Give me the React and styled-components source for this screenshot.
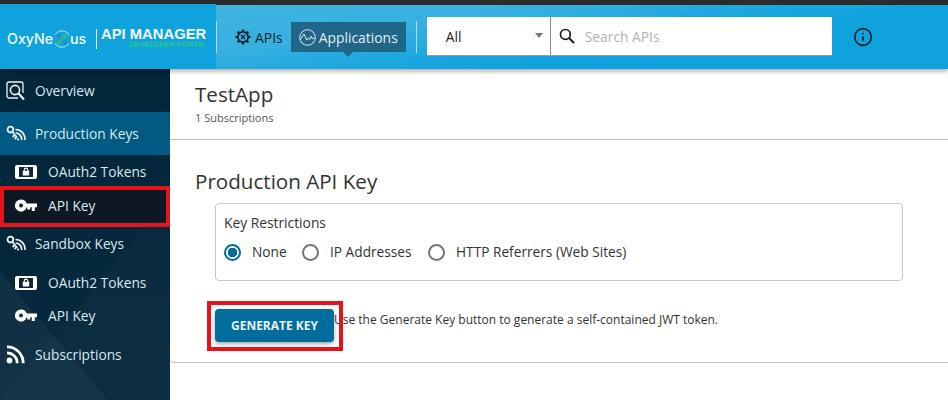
import React from "react";
import styled, { createGlobalStyle } from "styled-components";
import { Info } from "lucide-react";

const GlobalStyle = createGlobalStyle`
  html, body {
    margin: 0;
    padding: 0;
    background: #fff;
    overflow: hidden;
  }
  body {
    font-family: "Open Sans", "Liberation Sans", sans-serif;
  }
  * {
    box-sizing: border-box;
  }
`;

const GearIcon = () => (
  <svg width="16" height="16" viewBox="0 0 16 16" fill="none" stroke="#10242f">
    <circle cx="8" cy="8" r="5.2" strokeWidth="1.8" />
    <path d="M8 .4v2.6M8 13v2.6M.4 8H3M13 8h2.6M2.6 2.6l1.9 1.9M11.5 11.5l1.9 1.9M13.4 2.6l-1.9 1.9M4.5 11.5l-1.9 1.9" strokeWidth="2.2" />
    <path d="M6 6l4 4M10 6l-4 4" strokeWidth="1.3" />
  </svg>
);

const WaveIcon = () => (
  <svg width="17" height="17" viewBox="0 0 17 17" fill="none" stroke="#e4eef3" strokeWidth="1">
    <circle cx="8.5" cy="8.5" r="7.8" />
    <path d="M1.2 10.5L5 5.2l2.8 6 1.6-2.4 1.4 1.6 1.4-3.2 1.2 2.4 2-.4" />
  </svg>
);

const SearchIcon = () => (
  <svg width="16" height="16" viewBox="0 0 16 16" fill="none" stroke="#1c1c1c">
    <circle cx="6.4" cy="6.4" r="4.9" strokeWidth="1.7" />
    <path d="M10 10l5 5" strokeWidth="2" />
  </svg>
);

const OverviewIcon = () => (
  <svg width="20" height="20" viewBox="0 0 20 20" fill="none" stroke="#eef4f7">
    <path d="M12 17H3a2 2 0 0 1-2-2V3a2 2 0 0 1 2-2h12a2 2 0 0 1 2 2v9" strokeWidth="1.3" />
    <circle cx="9" cy="9" r="4.6" strokeWidth="1.6" />
    <path d="M12.5 12.5l5.5 6" strokeWidth="2.2" />
  </svg>
);

const KeyFeedIcon = () => (
  <svg width="20" height="18" viewBox="0 0 20 18" fill="none" stroke="#eef4f7">
    <circle cx="4.4" cy="4.6" r="2.9" strokeWidth="1.8" />
    <path d="M6.2 6.8l5 6M8.8 10l-2.2 2M10.6 12.2l-2 1.8" strokeWidth="1.7" />
    <path d="M9.5 4.5a9.5 9.5 0 0 1 9.5 10.5M9.5 8a6 6 0 0 1 6 7" strokeWidth="1.7" />
    <circle cx="12" cy="14.5" r="1.1" fill="#eef4f7" stroke="none" />
  </svg>
);

const FeedIcon = () => (
  <svg width="19" height="19" viewBox="0 0 19 19" fill="none" stroke="#fff">
    <path d="M1 1.8a16.2 16.2 0 0 1 16.2 16.4M1 7.8a10.2 10.2 0 0 1 10.2 10.4" strokeWidth="2.8" />
    <circle cx="3.5" cy="15.5" r="2.9" fill="#fff" stroke="none" />
  </svg>
);

const TokenIcon = () => (
  <svg width="22" height="14" viewBox="0 0 22 14">
    <rect width="22" height="14" rx="2" fill="#fff" />
    <rect x="4" y="2" width="14" height="10" fill="#0c2433" />
    <rect x="7.8" y="5.8" width="6.4" height="4.8" rx=".5" fill="#fff" />
    <path d="M9.2 6V4.9a1.8 1.8 0 0 1 3.6 0V6" fill="none" stroke="#fff" strokeWidth="1.1" />
  </svg>
);

const KeyIcon = () => (
  <svg width="22" height="13" viewBox="0 0 22 13">
    <path fillRule="evenodd" fill="#fff" d="M6 .5a6 6 0 0 1 5.7 4.1H22v3.6h-2.2V12h-3V8.2h-1.6v2.4h-2.9V8.2h-.6A6 6 0 1 1 6 .5zm0 4a2 2 0 1 0 0 4 2 2 0 0 0 0-4z" />
  </svg>
);

const LogoMark = () => (
  <svg width="24" height="24" viewBox="0 0 24 24" fill="none">
    <path d="M3.5 7a10 10 0 0 1 17 0M20.5 17a10 10 0 0 1-17 0" stroke="#d8f3fb" strokeWidth="1" />
    <path d="M6.5 6.5l11 11" stroke="#1e8fc8" strokeWidth="4.4" />
    <path d="M17.5 6.5l-11 11" stroke="#2ab59a" strokeWidth="4.4" />
  </svg>
);

const sideItems = [
  { label: "Overview", icon: <OverviewIcon />, kind: "top" },
  { label: "Production Keys", icon: <KeyFeedIcon />, kind: "active" },
  { label: "OAuth2 Tokens", icon: <TokenIcon />, kind: "sub", h: 33 },
  { label: "API Key", icon: <KeyIcon />, kind: "selected", h: 34 },
  { label: "Sandbox Keys", icon: <KeyFeedIcon />, kind: "top", h: 43 },
  { label: "OAuth2 Tokens", icon: <TokenIcon />, kind: "sub", h: 35 },
  { label: "API Key", icon: <KeyIcon />, kind: "sub", h: 31 },
  { label: "Subscriptions", icon: <FeedIcon />, kind: "top", h: 46 },
];

const App = () => {
  return (
    <Page>
      <GlobalStyle />
      <Header>
        <LogoBlock>
          <Logo>
            OxyNe
            <LogoX>
              <LogoMark />
            </LogoX>
            us
          </Logo>
          <LogoRule />
          <Product>
            <ProductName>API MANAGER</ProductName>
            <ProductSub>DEVELOPER PORTAL</ProductSub>
          </Product>
        </LogoBlock>
        <Nav>
          <NavDivider />
          <NavLink>
            <GearIcon />
            APIs
          </NavLink>
          <NavLink $active>
            <WaveIcon />
            Applications
          </NavLink>
          <NavDivider />
          <SearchBar>
            <Select>
              All
              <Caret />
            </Select>
            <SearchField>
              <SearchIcon />
              <Placeholder>Search APIs</Placeholder>
            </SearchField>
          </SearchBar>
          <InfoWrap>
            <Info size={20} strokeWidth={2} color="#10242f" />
          </InfoWrap>
        </Nav>
      </Header>
      <Body>
        <Sidebar>
          {sideItems.map((item, i) => (
            <SideRow key={i} $kind={item.kind} $h={item.h}>
              <SideIcon $kind={item.kind}>{item.icon}</SideIcon>
              {item.label}
            </SideRow>
          ))}
          <Highlight $top={117} $left={0} $w={170} $h={41} />
        </Sidebar>
        <Main>
          <TitleBar>
            <Title>TestApp</Title>
            <SubTitle>1 Subscriptions</SubTitle>
          </TitleBar>
          <Card>
            <CardTitle>Production API Key</CardTitle>
            <Fieldset>
              <Legend>Key Restrictions</Legend>
              <RadioRow>
                <RadioItem $w={78}>
                  <Radio $on />
                  None
                </RadioItem>
                <RadioItem $w={126}>
                  <Radio />
                  IP Addresses
                </RadioItem>
                <RadioItem>
                  <Radio />
                  HTTP Referrers (Web Sites)
                </RadioItem>
              </RadioRow>
            </Fieldset>
            <ActionRow>
              <GenerateButton>GENERATE KEY</GenerateButton>
              <Hint>Use the Generate Key button to generate a self-contained JWT token.</Hint>
              <Highlight $top={-8} $left={-8} $w={136} $h={50} />
            </ActionRow>
          </Card>
        </Main>
      </Body>
    </Page>
  );
};

const Page = styled.div`
  width: 948px;
  height: 400px;
  overflow: hidden;
  background: #fff;
`;

const Header = styled.header`
  position: relative;
  z-index: 2;
  display: flex;
  height: 69px;
  border-top: 4px solid #2b2b2b;
  background: #0fa2dc;
  box-shadow: 0 2px 5px rgba(0, 0, 0, 0.35);
`;

const LogoBlock = styled.div`
  display: flex;
  align-items: center;
  width: 216px;
  padding: 4px 0 0 7px;
  background: #0fa2dc;
  color: #fff;
`;

const Logo = styled.div`
  display: flex;
  align-items: center;
  width: 89px;
  font-family: "Inter", sans-serif;
  font-size: 14.2px;
  font-weight: 500;
  color: #eefaff;
`;

const LogoX = styled.span`
  display: flex;
  width: 17px;
  margin: 0;
  justify-content: center;
  svg {
    flex: none;
    width: 20px;
    height: 20px;
  }
`;

const LogoRule = styled.div`
  width: 1px;
  height: 20px;
  margin: 0 4px 0 0;
  background: #fff;
`;

const Product = styled.div`
  display: flex;
  flex-direction: column;
  align-items: flex-end;
  margin-top: -3px;
`;

const ProductName = styled.div`
  font-family: "Liberation Sans", sans-serif;
  font-size: 14.8px;
  font-weight: 700;
  line-height: 14px;
  white-space: nowrap;
  color: #f2fbff;
`;

const ProductSub = styled.div`
  font-family: "Liberation Sans", sans-serif;
  font-size: 7.5px;
  line-height: 7px;
  white-space: nowrap;
  color: #38d860;
`;

const Nav = styled.nav`
  flex: 1;
  display: flex;
  align-items: center;
  padding-top: 1px;
  background: linear-gradient(172deg, #40b4e1 0%, #36b0e0 30%, #1ea8df 46%, #0fa2dc 62%);
  border-top: 1px solid #2b2b2b;
`;

const NavDivider = styled.div`
  flex: none;
  width: 1px;
  height: 32px;
  margin-top: -1px;
  background: #b9d6e2;
`;

const NavLink = styled.a`
  position: relative;
  display: flex;
  align-items: center;
  gap: ${(p) => (p.$active ? "3px" : "4px")};
  height: 30px;
  margin: -1px 0 0 0;
  padding: ${(p) => (p.$active ? "0 8px 0 8px" : "0 8px 0 18px")};
  margin-right: ${(p) => (p.$active ? "10px" : "0")};
  font-size: 13.9px;
  color: ${(p) => (p.$active ? "#e4eef3" : "#10242f")};
  background: ${(p) => (p.$active ? "#1f6688" : "transparent")};
  white-space: nowrap;

  &::after {
    content: "";
    display: ${(p) => (p.$active ? "block" : "none")};
    position: absolute;
    left: 50%;
    bottom: -5px;
    margin-left: -5px;
    border-left: 5px solid transparent;
    border-right: 5px solid transparent;
    border-top: 5px solid #1f6688;
  }
`;

const SearchBar = styled.div`
  display: flex;
  width: 405px;
  height: 39px;
  margin: -2px 0 0 10px;
  background: #fff;
  border-bottom: 1px solid #9a9a9a;
`;

const Select = styled.div`
  position: relative;
  display: flex;
  align-items: center;
  width: 124px;
  padding-left: 19px;
  font-size: 13.8px;
  color: #222;
  border-right: 1px solid #8d8d8d;
`;

const Caret = styled.span`
  position: absolute;
  right: 7px;
  top: 16px;
  border-left: 4px solid transparent;
  border-right: 4px solid transparent;
  border-top: 5px solid #777;
`;

const SearchField = styled.div`
  flex: 1;
  display: flex;
  align-items: center;
  gap: 10px;
  padding-left: 8px;
`;

const Placeholder = styled.span`
  font-size: 13.8px;
  color: #aeb3b7;
`;

const InfoWrap = styled.div`
  display: flex;
  margin: -2px 0 0 21px;
`;

const Body = styled.div`
  display: flex;
  height: 331px;
`;

const Sidebar = styled.aside`
  position: relative;
  flex: none;
  width: 170px;
  background:
    linear-gradient(50deg, rgba(255, 255, 255, 0.04) 0 24%, transparent 24%),
    linear-gradient(130deg, transparent 0 62%, rgba(255, 255, 255, 0.02) 62%),
    linear-gradient(180deg, #03263a 0%, #08293d 100%);
`;

const rowBackground = {
  active: "#005a82",
  selected: "#0e1724",
};

const SideRow = styled.div`
  display: flex;
  align-items: center;
  height: ${(p) => p.$h || 43}px;
  padding-left: ${(p) => (p.$kind === "sub" || p.$kind === "selected" ? "15px" : "6px")};
  font-size: 13.75px;
  color: #d8e8f0;
  background: ${(p) => rowBackground[p.$kind] || "transparent"};
`;

const SideIcon = styled.span`
  display: flex;
  align-items: center;
  justify-content: flex-start;
  flex: none;
  width: ${(p) => (p.$kind === "sub" || p.$kind === "selected" ? "33px" : "29px")};
`;

const Highlight = styled.div`
  position: absolute;
  top: ${(p) => p.$top}px;
  left: ${(p) => p.$left}px;
  width: ${(p) => p.$w}px;
  height: ${(p) => p.$h}px;
  border: 4px solid #e5141b;
  pointer-events: none;
`;

const Main = styled.main`
  flex: 1;
  min-width: 0;
`;

const TitleBar = styled.div`
  height: 71px;
  padding: 12px 25px 0;
  border-bottom: 1px solid #bdbdbd;
`;

const Title = styled.h1`
  margin: 0;
  font-size: 20.6px;
  font-weight: 400;
  line-height: 27px;
  color: #333;
`;

const SubTitle = styled.div`
  margin-top: 2px;
  font-size: 11px;
  line-height: 15px;
  color: #555;
`;

const Card = styled.section`
  height: 223px;
  padding: 28px 25px 0;
  border-bottom: 1px solid #bdbdbd;
  border-radius: 0 0 0 4px;
`;

const CardTitle = styled.h2`
  margin: 0;
  font-size: 20.6px;
  font-weight: 400;
  line-height: 27px;
  color: #333;
`;

const Fieldset = styled.div`
  width: 688px;
  height: 78px;
  margin: 8px 0 0 20px;
  padding: 9px 8px 0;
  border: 1px solid #c8c8c8;
  border-radius: 4px;
`;

const Legend = styled.div`
  font-size: 13.8px;
  line-height: 20px;
  color: #333;
`;

const RadioRow = styled.div`
  display: flex;
  margin-top: 9px;
`;

const RadioItem = styled.label`
  display: flex;
  align-items: center;
  gap: 11px;
  width: ${(p) => (p.$w ? `${p.$w}px` : "auto")};
  font-size: 13.7px;
  line-height: 20px;
  color: #333;
`;

const Radio = styled.span`
  flex: none;
  width: 17px;
  height: 17px;
  border-radius: 50%;
  border: 2px solid ${(p) => (p.$on ? "#006d9c" : "#757575")};
  background: ${(p) => (p.$on ? "radial-gradient(circle, #006d9c 0 4.5px, #fff 5px)" : "#fff")};
`;

const ActionRow = styled.div`
  position: relative;
  display: flex;
  margin: 28px 0 0 20px;
`;

const GenerateButton = styled.button`
  flex: none;
  width: 119px;
  height: 33px;
  padding: 0;
  border: 0;
  border-radius: 4px;
  font-family: inherit;
  font-size: 12px;
  font-weight: 700;
  color: #e8f3f8;
  background: #006d9c;
  box-shadow: 0 2px 4px rgba(0, 0, 0, 0.35);
`;

const Hint = styled.span`
  font-size: 12px;
  line-height: 22px;
  color: #333;
`;

export default App;
